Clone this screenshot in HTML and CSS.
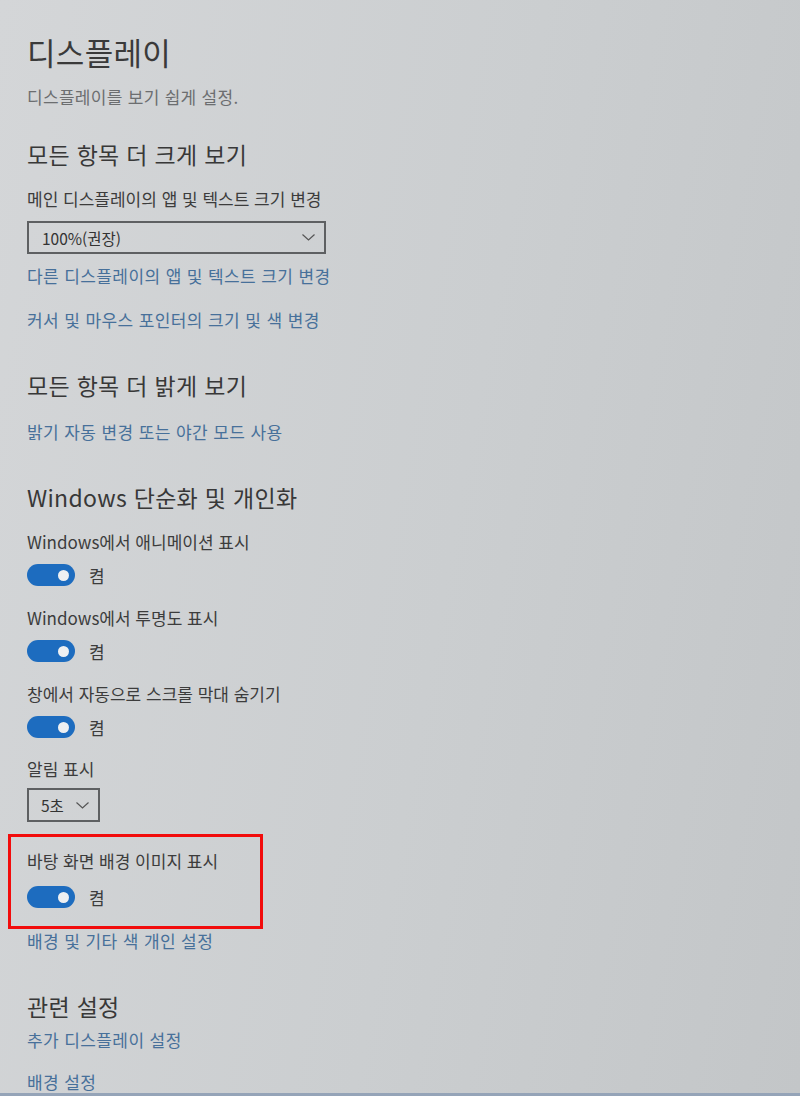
FILE: index.html
```html
<!DOCTYPE html>
<html lang="ko">
<head>
  <meta charset="utf-8">
  <meta name="viewport" content="width=device-width, initial-scale=1">
  <title>디스플레이</title>
  <link rel="stylesheet" href="styles.css">
</head>
<body>
  <div class="settings-page">
    <h1 class="page-title">디스플레이</h1>
    <p class="page-desc">디스플레이를 보기 쉽게 설정.</p>

    <h2 class="section-title">모든 항목 더 크게 보기</h2>
    <div class="setting-label">메인 디스플레이의 앱 및 텍스트 크기 변경</div>
    <div class="select select-wide">
      <span>100%(권장)</span>
      <svg class="chevron" width="13" height="7" viewBox="0 0 13 7"><polyline points="0.5,0.5 6.5,6 12.5,0.5" fill="none" stroke="#555" stroke-width="1.2"/></svg>
    </div>
    <a class="link" href="#">다른 디스플레이의 앱 및 텍스트 크기 변경</a>
    <a class="link link-spaced" href="#">커서 및 마우스 포인터의 크기 및 색 변경</a>

    <h2 class="section-title section-gap">모든 항목 더 밝게 보기</h2>
    <a class="link link-first" href="#">밝기 자동 변경 또는 야간 모드 사용</a>

    <h2 class="section-title section-gap">Windows 단순화 및 개인화</h2>
    <div class="setting-label">Windows에서 애니메이션 표시</div>
    <div class="toggle-row">
      <span class="toggle"><span class="knob"></span></span>
      <span class="toggle-text">켬</span>
    </div>
    <div class="setting-label">Windows에서 투명도 표시</div>
    <div class="toggle-row">
      <span class="toggle"><span class="knob"></span></span>
      <span class="toggle-text">켬</span>
    </div>
    <div class="setting-label">창에서 자동으로 스크롤 막대 숨기기</div>
    <div class="toggle-row">
      <span class="toggle"><span class="knob"></span></span>
      <span class="toggle-text">켬</span>
    </div>
    <div class="setting-label label-loose">알림 표시</div>
    <div class="select select-small">
      <span>5초</span>
      <svg class="chevron" width="13" height="7" viewBox="0 0 13 7"><polyline points="0.5,0.5 6.5,6 12.5,0.5" fill="none" stroke="#555" stroke-width="1.2"/></svg>
    </div>

    <div class="highlight">
      <div class="setting-label">바탕 화면 배경 이미지 표시</div>
      <div class="toggle-row">
        <span class="toggle"><span class="knob"></span></span>
        <span class="toggle-text">켬</span>
      </div>
    </div>
    <a class="link link-after-box" href="#">배경 및 기타 색 개인 설정</a>

    <h2 class="section-title section-gap">관련 설정</h2>
    <a class="link link-tight" href="#">추가 디스플레이 설정</a>
    <a class="link link-last" href="#">배경 설정</a>
  </div>
</body>
</html>
```

FILE: styles.css
```css
* {
  margin: 0;
  padding: 0;
  box-sizing: border-box;
}

body {
  font-family: "Noto Sans CJK KR", "Noto Sans", sans-serif;
  background: linear-gradient(100deg, #d4d6d8 0%, #cbced0 55%, #c3c6c8 100%);
  min-height: 100vh;
  box-shadow: inset 0 -3px 0 #95a4b8;
  color: #363636;
}

.settings-page {
  padding: 32px 0 0 27px;
}

.page-title {
  font-size: 31px;
  font-weight: 400;
  line-height: 40px;
  letter-spacing: 0.3px;
  color: #3a3a3a;
}

.page-desc {
  margin-top: 15px;
  font-size: 17px;
  line-height: 20px;
  letter-spacing: 0.3px;
  color: #6c6e70;
}

.section-title {
  margin-top: 32px;
  font-size: 23px;
  font-weight: 400;
  line-height: 30px;
  letter-spacing: 0.3px;
  color: #383838;
}

.section-gap {
  margin-top: 39px;
}

.setting-label {
  margin-top: 21px;
  font-size: 17px;
  line-height: 22px;
  color: #3c3c3c;
}

.section-title + .setting-label {
  margin-top: 19px;
}

.label-loose {
  margin-top: 20px;
}

.select {
  margin-top: 11px;
  height: 33px;
  border: 2px solid #5e6062;
  display: flex;
  align-items: center;
  justify-content: space-between;
  font-size: 15.5px;
  color: #333;
}

.select-wide {
  width: 299px;
  padding: 0 9px 0 13px;
}

.select-small {
  margin-top: 8px;
  width: 73px;
  height: 34px;
  padding: 0 9px 0 12px;
}

.chevron {
  display: block;
}

.link {
  display: block;
  margin-top: 11px;
  font-size: 17px;
  line-height: 22px;
  letter-spacing: 0.4px;
  color: #47709a;
  text-decoration: none;
}

.link-spaced {
  margin-top: 22px;
}

.link-first {
  margin-top: 21px;
}

.link-tight {
  margin-top: 8px;
}

.link-last {
  margin-top: 20px;
}

.toggle-row {
  margin-top: 11px;
  display: flex;
  align-items: center;
  gap: 14px;
  height: 22px;
}

.toggle {
  width: 48px;
  height: 22px;
  border-radius: 11px;
  background: #1d6cbf;
  display: flex;
  align-items: center;
  justify-content: flex-end;
  padding-right: 6px;
}

.knob {
  width: 11px;
  height: 11px;
  border-radius: 50%;
  background: #eef0f2;
}

.toggle-text {
  font-size: 17px;
  color: #3c3c3c;
}

.highlight {
  margin: 12px 0 0 -19px;
  width: 255px;
  border: 3px solid #f20c0c;
  padding: 13px 0 18px 16px;
}

.highlight .setting-label {
  margin-top: 0;
}

.highlight .toggle-row {
  margin-top: 14px;
}

.link-after-box {
  margin-top: 1px;
}
```
